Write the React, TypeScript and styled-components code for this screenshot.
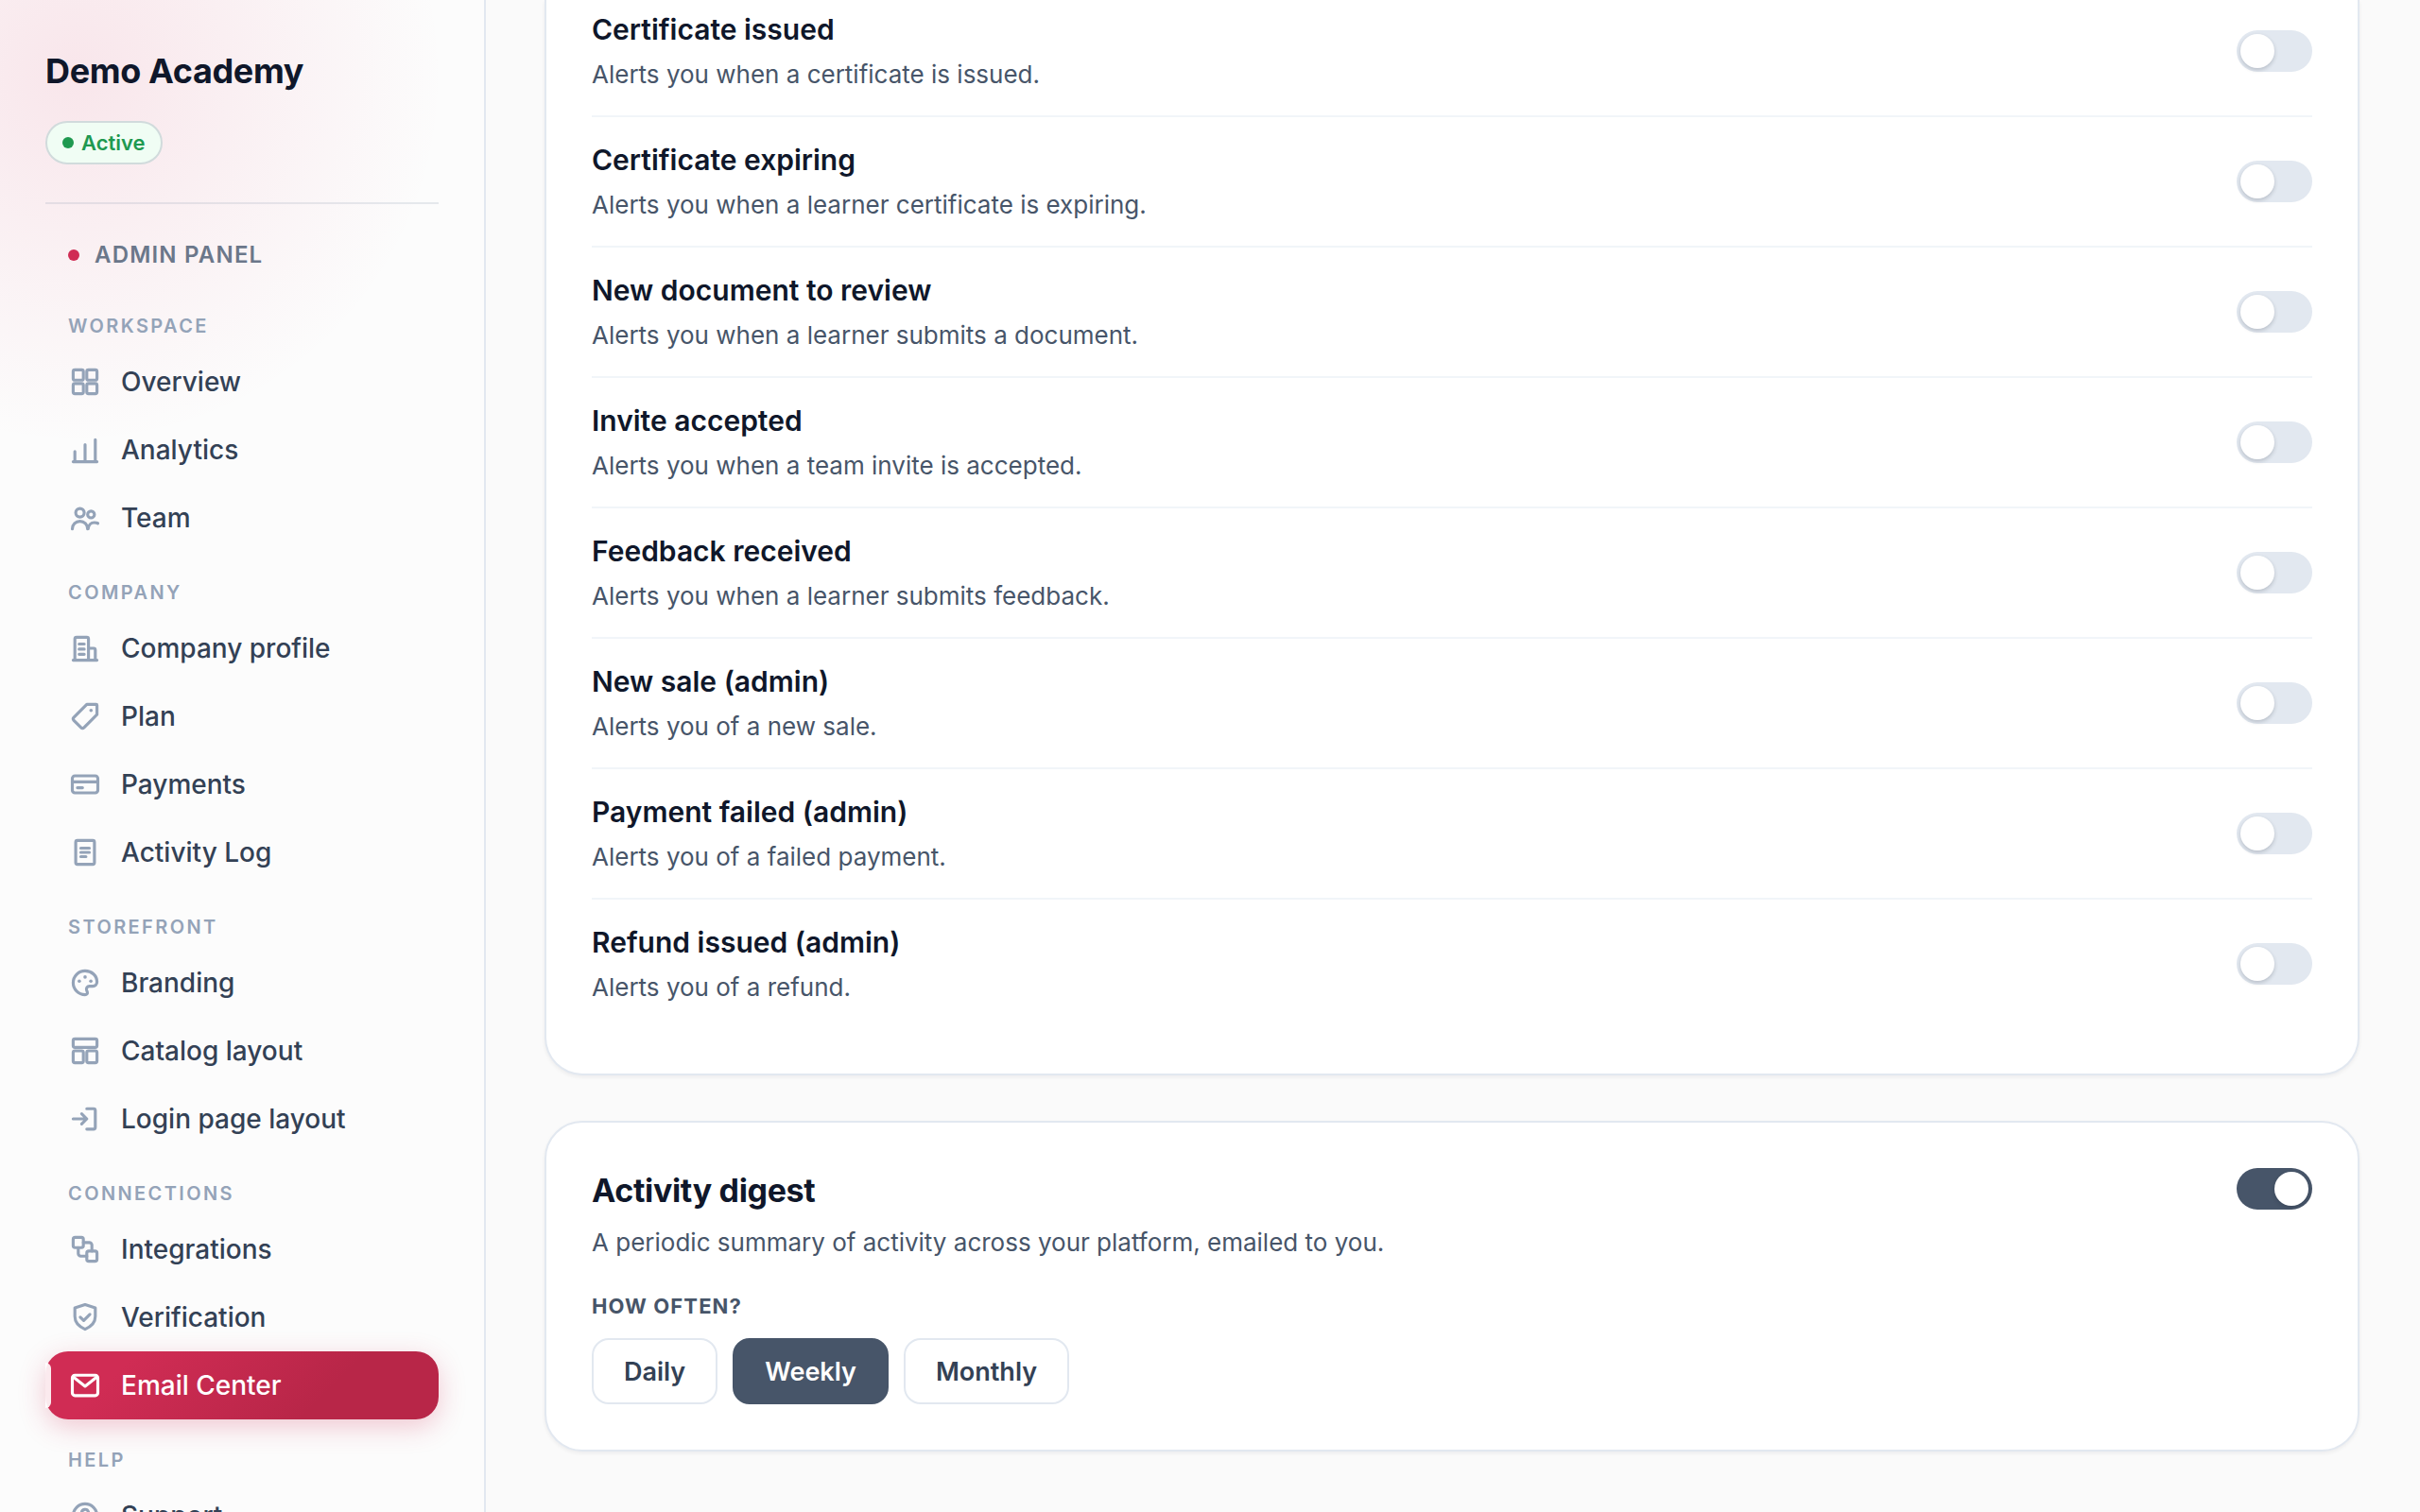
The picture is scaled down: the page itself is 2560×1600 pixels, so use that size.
import React, { useId, useState } from "react";
import styled, { createGlobalStyle, css } from "styled-components";

const color = {
  ink: "#0f172a",
  text: "#334155",
  muted: "#475569",
  soft: "#6b778a",
  faint: "#94a3b8",
  line: "#e2e8f0",
  lineSoft: "#f1f5f9",
  brand: "#d02c54",
  brandDark: "#b82648",
  green: "#1f9950",
};

const GlobalStyle = createGlobalStyle`
  *, *::before, *::after { box-sizing: border-box; }
  body {
    margin: 0;
    background: #fafafa;
    color: ${color.text};
    font-family: Inter, "Liberation Sans", sans-serif;
    -webkit-font-smoothing: antialiased;
  }
  h1, h2, h3, p, ul { margin: 0; padding: 0; }
`;

const Shell = styled.div`
  display: grid;
  grid-template-columns: 512px minmax(0, 1fr);
  height: 100vh;
`;

const Sidebar = styled.aside`
  overflow-y: auto;
  scrollbar-width: none;
  padding: 48px;
  background:
    radial-gradient(circle at 80px 80px, rgba(220, 50, 95, 0.11), rgba(220, 50, 95, 0) 390px),
    #fcfcfc;
  box-shadow: 2px 0 0 ${color.line};
`;

const Brand = styled.header`
  padding-bottom: 40px;
  border-bottom: 2px solid rgba(148, 163, 184, 0.22);
`;

const BrandName = styled.h1`
  font-size: 36px;
  line-height: 54px;
  font-weight: 700;
  letter-spacing: -0.01em;
  color: ${color.ink};
`;

const Status = styled.span`
  display: flex;
  width: fit-content;
  align-items: center;
  gap: 8px;
  height: 46px;
  margin-top: 26px;
  padding: 0 16px;
  border: 2px solid #d1dbdc;
  border-radius: 24px;
  background: #f0fdf4;
  color: ${color.green};
  font-size: 22px;
  font-weight: 600;
`;

const Dot = styled.span`
  flex: none;
  width: 12px;
  height: 12px;
  border-radius: 50%;
  background: ${(p) => p.color};
`;

const PanelTitle = styled.p`
  display: flex;
  align-items: center;
  gap: 16px;
  padding: 36px 24px 14px;
  font-size: 24px;
  line-height: 36px;
  font-weight: 600;
  letter-spacing: 0.05em;
  text-transform: uppercase;
  color: ${color.soft};
`;

const GroupTitle = styled.h2`
  padding: 28px 24px 8px;
  font-size: 20px;
  line-height: 30px;
  font-weight: 600;
  letter-spacing: 0.12em;
  text-transform: uppercase;
  color: ${color.faint};
`;

const NavList = styled.ul`
  list-style: none;
`;

const NavLink = styled.a<{ $active?: boolean }>`
  position: relative;
  display: flex;
  align-items: center;
  gap: 20px;
  height: 72px;
  padding: 0 24px;
  border-radius: 24px;
  font-size: 28px;
  font-weight: 500;
  color: ${color.text};
  text-decoration: none;

  svg {
    flex: none;
    color: ${color.faint};
  }

  ${(p) =>
    p.$active &&
    css`
      color: #fff;
      background: linear-gradient(135deg, ${color.brand} 20%, ${color.brandDark} 70%);
      box-shadow: 0 8px 28px rgba(208, 44, 84, 0.25);

      svg {
        color: #fff;
      }

      &::before {
        content: "";
        position: absolute;
        left: 0;
        top: 12px;
        bottom: 12px;
        width: 6px;
        border-radius: 0 6px 6px 0;
        background: rgba(255, 255, 255, 0.9);
      }
    `}
`;

const Main = styled.main`
  display: flex;
  flex-direction: column;
  gap: 48px;
  min-width: 0;
  padding: 0 64px 64px;
`;

const Card = styled.section<{ $continued?: boolean }>`
  padding: 48px;
  border: 2px solid ${color.line};
  border-radius: 40px;
  background: #fff;
  box-shadow: 0 2px 4px rgba(15, 23, 42, 0.06);

  ${(p) =>
    p.$continued &&
    css`
      padding-top: 0;
      border-top: 0;
      border-top-left-radius: 0;
      border-top-right-radius: 0;
    `}
`;

const AlertRow = styled.div`
  display: flex;
  align-items: center;
  justify-content: space-between;
  gap: 32px;
  padding: 22px 0;

  &:first-child {
    padding-top: 8px;
  }

  & + & {
    border-top: 2px solid ${color.lineSoft};
  }
`;

const AlertName = styled.label`
  display: block;
  font-size: 30px;
  line-height: 46px;
  font-weight: 600;
  color: ${color.ink};
`;

const Description = styled.p`
  margin-top: 4px;
  font-size: 26px;
  line-height: 42px;
  color: ${color.muted};
`;

const Switch = styled.input.attrs({ type: "checkbox", role: "switch" })`
  appearance: none;
  flex: none;
  display: flex;
  width: 80px;
  height: 44px;
  margin: 0;
  padding: 4px;
  border-radius: 22px;
  background: ${color.line};
  cursor: pointer;

  &::before {
    content: "";
    width: 36px;
    height: 36px;
    border-radius: 50%;
    background: #fff;
    box-shadow: 0 2px 4px rgba(15, 23, 42, 0.2);
  }

  &:checked {
    justify-content: flex-end;
    background: ${color.muted};
  }
`;

const DigestHead = styled.div`
  display: flex;
  align-items: flex-start;
  justify-content: space-between;
  gap: 32px;
`;

const DigestName = styled.label`
  display: block;
  margin-bottom: 10px;
  font-size: 34px;
  line-height: 48px;
  font-weight: 700;
  letter-spacing: -0.01em;
  color: ${color.ink};
`;

const DigestText = styled(Description)`
  margin-top: 0;
`;

const FrequencyTitle = styled.h3`
  margin: 30px 0 18px;
  font-size: 22px;
  line-height: 32px;
  font-weight: 700;
  letter-spacing: 0.05em;
  text-transform: uppercase;
  color: ${color.muted};
`;

const Choices = styled.div`
  display: flex;
  flex-wrap: wrap;
  gap: 16px;
`;

const Choice = styled.button<{ $selected: boolean }>`
  height: 70px;
  padding: 0 32px;
  border: 2px solid ${(p) => (p.$selected ? color.muted : color.line)};
  border-radius: 18px;
  background: ${(p) => (p.$selected ? color.muted : "#fff")};
  color: ${(p) => (p.$selected ? "#fff" : color.text)};
  font: inherit;
  font-size: 27px;
  font-weight: 600;
  cursor: pointer;
`;

const icons: Record<string, React.ReactNode> = {
  overview: (
    <>
      <rect x="3" y="3" width="6" height="6" rx="1" />
      <rect x="11" y="3" width="6" height="6" rx="1" />
      <rect x="3" y="11" width="6" height="6" rx="1" />
      <rect x="11" y="11" width="6" height="6" rx="1" />
    </>
  ),
  analytics: <path d="M3 17h14M4 17v-6M10 17V7M16 17V4" />,
  team: (
    <>
      <circle cx="7" cy="7" r="2.5" />
      <circle cx="13.5" cy="8" r="2" />
      <path d="M2.5 16.5C2.5 14 4.5 12 7 12s4.5 2 4.5 4.5M11.8 16.5c.2-2.2 1.7-3.7 3.6-3.7.8 0 1.500.1 2.100.4" />
    </>
  ),
  company: (
    <>
      <path d="M3 17h14M4 17V4.500a1 1 0 0 1 1-1h6a1 1 0 0 1 1 1V17M12 10h3a1 1 0 0 1 1 1v6" />
      <path d="M6.500 7.500h3M6.500 10.500h3M6.500 13.500h3" />
    </>
  ),
  plan: (
    <>
      <path d="M11 3h5.500a.5.5 0 0 1 .5.5V9l-7.600 7.600a1.300 1.300 0 0 1-1.800 0l-4.200-4.200a1.300 1.300 0 0 1 0-1.800z" />
      <circle cx="13.500" cy="6.500" r="1" fill="currentColor" stroke="none" />
    </>
  ),
  payments: (
    <>
      <rect x="2.500" y="5" width="15" height="10" rx="1.500" />
      <path d="M2.500 8.500h15M5.500 12h3" />
    </>
  ),
  log: (
    <>
      <rect x="4.500" y="3" width="11" height="14" rx="1" />
      <path d="M7.500 7.500h5M7.500 10h5M7.500 12.500h3" />
    </>
  ),
  branding: (
    <>
      <path d="M10 3a7 7 0 0 0 0 14c1 0 1.600-.7 1.300-1.600l-.4-1.100c-.4-1.200.4-2.300 1.600-2.300H14.500c1.400 0 2.500-1 2.500-2.500C17 5.800 13.900 3 10 3z" />
      <g fill="currentColor" stroke="none">
        <circle cx="6.600" cy="9" r="1" />
        <circle cx="10" cy="6.600" r="1" />
        <circle cx="13.400" cy="9" r="1" />
      </g>
    </>
  ),
  catalog: (
    <>
      <rect x="3" y="3" width="14" height="5" rx="1" />
      <rect x="3" y="10" width="6" height="7" rx="1" />
      <rect x="11" y="10" width="6" height="7" rx="1" />
    </>
  ),
  login: <path d="M11 4h4a1 1 0 0 1 1 1v10a1 1 0 0 1-1 1h-4M3 10h8M8 7l3 3-3 3" />,
  integrations: (
    <>
      <rect x="3" y="3" width="6" height="6" rx="1.200" />
      <rect x="11" y="11" width="6" height="6" rx="1.200" />
      <path d="M9 6h3.500A1.500 1.500 0 0 1 14 7.500V11M6 9v3.500A1.500 1.500 0 0 0 7.500 14H11" />
    </>
  ),
  verification: (
    <path d="M10 2.500l6 2V9.500c0 3.600-2.400 6-6 7.500-3.600-1.500-6-3.900-6-7.500v-5zM7.200 9.900l2 2 3.600-3.600" />
  ),
  email: (
    <>
      <rect x="2.500" y="4" width="15" height="12" rx="1.500" />
      <path d="M3 5l7 5.500L17 5" />
    </>
  ),
  support: (
    <>
      <circle cx="10" cy="10" r="7" />
      <path d="M8 8.300a2 2 0 1 1 3 1.700c-.6.4-1 .7-1 1.400M10 13.600v.1" />
    </>
  ),
};

const Icon = ({ name }: { name: string }) => (
  <svg
    width="36"
    height="36"
    viewBox="0 0 20 20"
    fill="none"
    stroke="currentColor"
    strokeWidth="1.750"
    strokeLinecap="round"
    strokeLinejoin="round"
    aria-hidden="true"
  >
    {icons[name]}
  </svg>
);

const groups = [
  {
    title: "Workspace",
    items: [
      ["overview", "Overview"],
      ["analytics", "Analytics"],
      ["team", "Team"],
    ],
  },
  {
    title: "Company",
    items: [
      ["company", "Company profile"],
      ["plan", "Plan"],
      ["payments", "Payments"],
      ["log", "Activity Log"],
    ],
  },
  {
    title: "Storefront",
    items: [
      ["branding", "Branding"],
      ["catalog", "Catalog layout"],
      ["login", "Login page layout"],
    ],
  },
  {
    title: "Connections",
    items: [
      ["integrations", "Integrations"],
      ["verification", "Verification"],
      ["email", "Email Center"],
    ],
  },
  { title: "Help", items: [["support", "Support"]] },
];

const alerts = [
  ["Certificate issued", "Alerts you when a certificate is issued."],
  ["Certificate expiring", "Alerts you when a learner certificate is expiring."],
  ["New document to review", "Alerts you when a learner submits a document."],
  ["Invite accepted", "Alerts you when a team invite is accepted."],
  ["Feedback received", "Alerts you when a learner submits feedback."],
  ["New sale (admin)", "Alerts you of a new sale."],
  ["Payment failed (admin)", "Alerts you of a failed payment."],
  ["Refund issued (admin)", "Alerts you of a refund."],
];

function Alert({ name, text }: { name: string; text: string }) {
  const id = useId();
  return (
    <AlertRow>
      <div>
        <AlertName htmlFor={id}>{name}</AlertName>
        <Description>{text}</Description>
      </div>
      <Switch id={id} />
    </AlertRow>
  );
}

function Digest() {
  const id = useId();
  const [frequency, setFrequency] = useState("Weekly");
  return (
    <Card>
      <DigestHead>
        <div>
          <DigestName htmlFor={id}>Activity digest</DigestName>
          <DigestText>A periodic summary of activity across your platform, emailed to you.</DigestText>
        </div>
        <Switch id={id} defaultChecked />
      </DigestHead>
      <FrequencyTitle>How often?</FrequencyTitle>
      <Choices role="group" aria-label="How often?">
        {["Daily", "Weekly", "Monthly"].map((value) => (
          <Choice
            key={value}
            type="button"
            $selected={value === frequency}
            aria-pressed={value === frequency}
            onClick={() => setFrequency(value)}
          >
            {value}
          </Choice>
        ))}
      </Choices>
    </Card>
  );
}

export default function App() {
  return (
    <>
      <GlobalStyle />
      <Shell>
        <Sidebar>
          <Brand>
            <BrandName>Demo Academy</BrandName>
            <Status>
              <Dot color={color.green} />
              Active
            </Status>
          </Brand>
          <PanelTitle>
            <Dot color={color.brand} />
            Admin panel
          </PanelTitle>
          <nav aria-label="Admin panel">
            {groups.map((group) => (
              <section key={group.title}>
                <GroupTitle>{group.title}</GroupTitle>
                <NavList>
                  {group.items.map(([icon, label]) => (
                    <li key={icon}>
                      <NavLink
                        href={`#${icon}`}
                        $active={icon === "email"}
                        aria-current={icon === "email" ? "page" : undefined}
                      >
                        <Icon name={icon} />
                        {label}
                      </NavLink>
                    </li>
                  ))}
                </NavList>
              </section>
            ))}
          </nav>
        </Sidebar>
        <Main>
          <Card $continued>
            {alerts.map(([name, text]) => (
              <Alert key={name} name={name} text={text} />
            ))}
          </Card>
          <Digest />
        </Main>
      </Shell>
    </>
  );
}
